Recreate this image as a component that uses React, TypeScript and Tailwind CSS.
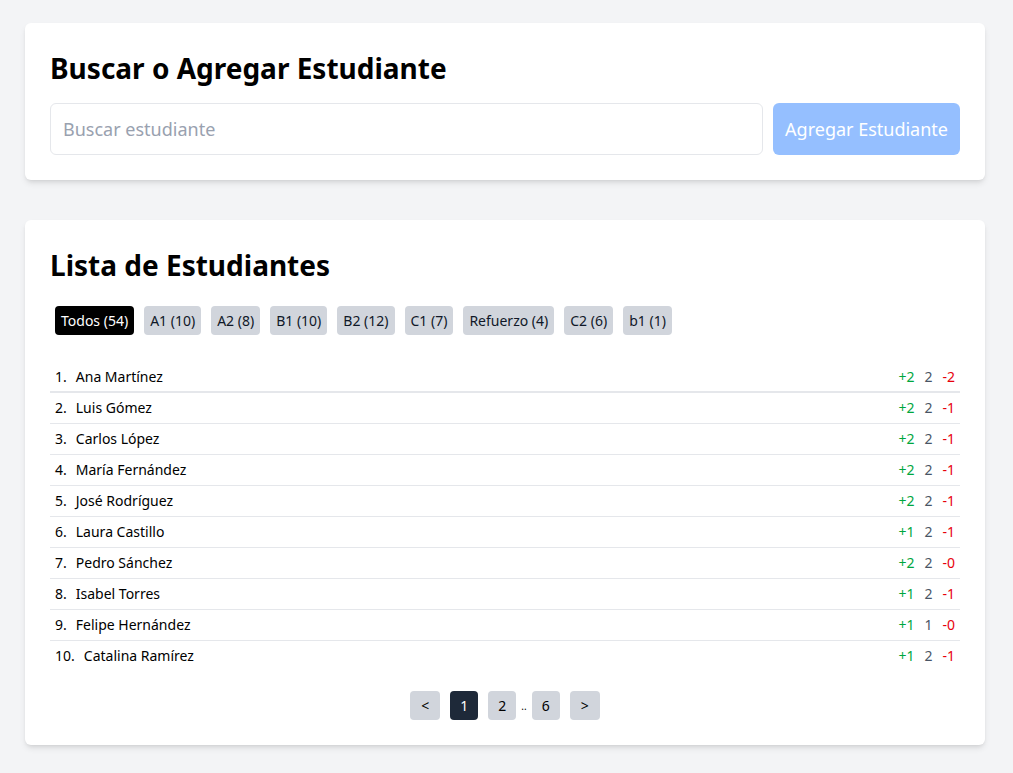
import { useState } from 'react';

type Student = { name: string; plus: number; mid: number; minus: number };

const students: Student[] = [
  { name: 'Ana Martínez', plus: 2, mid: 2, minus: 2 },
  { name: 'Luis Gómez', plus: 2, mid: 2, minus: 1 },
  { name: 'Carlos López', plus: 2, mid: 2, minus: 1 },
  { name: 'María Fernández', plus: 2, mid: 2, minus: 1 },
  { name: 'José Rodríguez', plus: 2, mid: 2, minus: 1 },
  { name: 'Laura Castillo', plus: 1, mid: 2, minus: 1 },
  { name: 'Pedro Sánchez', plus: 2, mid: 2, minus: 0 },
  { name: 'Isabel Torres', plus: 1, mid: 2, minus: 1 },
  { name: 'Felipe Hernández', plus: 1, mid: 1, minus: 0 },
  { name: 'Catalina Ramírez', plus: 1, mid: 2, minus: 1 },
];

const groups = [
  'Todos (54)',
  'A1 (10)',
  'A2 (8)',
  'B1 (10)',
  'B2 (12)',
  'C1 (7)',
  'Refuerzo (4)',
  'C2 (6)',
  'b1 (1)',
];

const App = () => {
  const [query, setQuery] = useState('');
  const [group, setGroup] = useState(0);
  const [page, setPage] = useState(1);

  return (
    <div className="min-h-[773px] bg-gray-100 pt-[23px] pb-6 pl-[25px] font-['Noto_Sans',sans-serif] text-black">
      <div className="w-[960px]">
        <div className="rounded-md bg-white p-[25px] shadow-md">
          <h2 className="mt-0.5 mb-[17px] text-[28px] font-bold leading-9">
            Buscar o Agregar Estudiante
          </h2>
          <div className="flex gap-[10px]">
            <input
              className="h-[52px] flex-1 rounded-md border border-gray-200 px-3 text-lg outline-none placeholder:text-gray-400"
              placeholder="Buscar estudiante"
              value={query}
              onChange={(e) => setQuery(e.target.value)}
            />
            <button
              className="h-[52px] rounded-md bg-blue-500/50 px-3 text-lg text-white"
              disabled={!query}
            >
              Agregar Estudiante
            </button>
          </div>
        </div>

        <div className="mt-10 rounded-md bg-white p-[25px] shadow-md">
          <h2 className="mt-0.5 mb-[18px] text-[28px] font-bold leading-9">
            Lista de Estudiantes
          </h2>
          <div className="flex flex-wrap">
            {groups.map((g, i) => (
              <button
                key={g}
                onClick={() => setGroup(i)}
                className={
                  i === group
                    ? 'm-[5px] h-[29px] rounded bg-black px-1.5 text-sm text-white'
                    : 'm-[5px] h-[29px] rounded bg-gray-300 px-1.5 text-sm text-gray-900'
                }
              >
                {g}
              </button>
            ))}
          </div>

          <ul className="mt-[23px]">
            {students.map((s, i) => (
              <li
                key={s.name}
                className={
                  i === 0
                    ? 'flex h-[30px] items-center justify-between border-b-2 border-gray-200 px-[5px] text-sm'
                    : i === students.length - 1
                      ? 'flex h-[30px] items-center justify-between px-[5px] text-sm'
                      : 'flex h-[31px] items-center justify-between border-b border-gray-200 px-[5px] text-sm'
                }
              >
                <span>
                  {i + 1}.<span className="ml-[9px]">{s.name}</span>
                </span>
                <span className="flex gap-[10px]">
                  <span className="text-green-600">+{s.plus}</span>
                  <span className="text-gray-600">{s.mid}</span>
                  <span className="text-red-600">-{s.minus}</span>
                </span>
              </li>
            ))}
          </ul>

          <div className="mt-5 flex items-center justify-center text-sm">
            <button
              className="mx-[5px] h-[29px] w-[30px] rounded bg-gray-300"
              onClick={() => setPage(Math.max(1, page - 1))}
            >
              &lt;
            </button>
            {[1, 2].map((p) => (
              <button
                key={p}
                onClick={() => setPage(p)}
                className={
                  p === page
                    ? 'mx-[5px] h-[29px] w-[28px] rounded bg-gray-800 text-white'
                    : 'mx-[5px] h-[29px] w-[28px] rounded bg-gray-300'
                }
              >
                {p}
              </button>
            ))}
            <span className="text-[10px] leading-none">..</span>
            <button
              onClick={() => setPage(6)}
              className={
                page === 6
                  ? 'mx-[5px] h-[29px] w-[28px] rounded bg-gray-800 text-white'
                  : 'mx-[5px] h-[29px] w-[28px] rounded bg-gray-300'
              }
            >
              6
            </button>
            <button
              className="mx-[5px] h-[29px] w-[30px] rounded bg-gray-300"
              onClick={() => setPage(Math.min(6, page + 1))}
            >
              &gt;
            </button>
          </div>
        </div>
      </div>
    </div>
  );
};

export default App;
